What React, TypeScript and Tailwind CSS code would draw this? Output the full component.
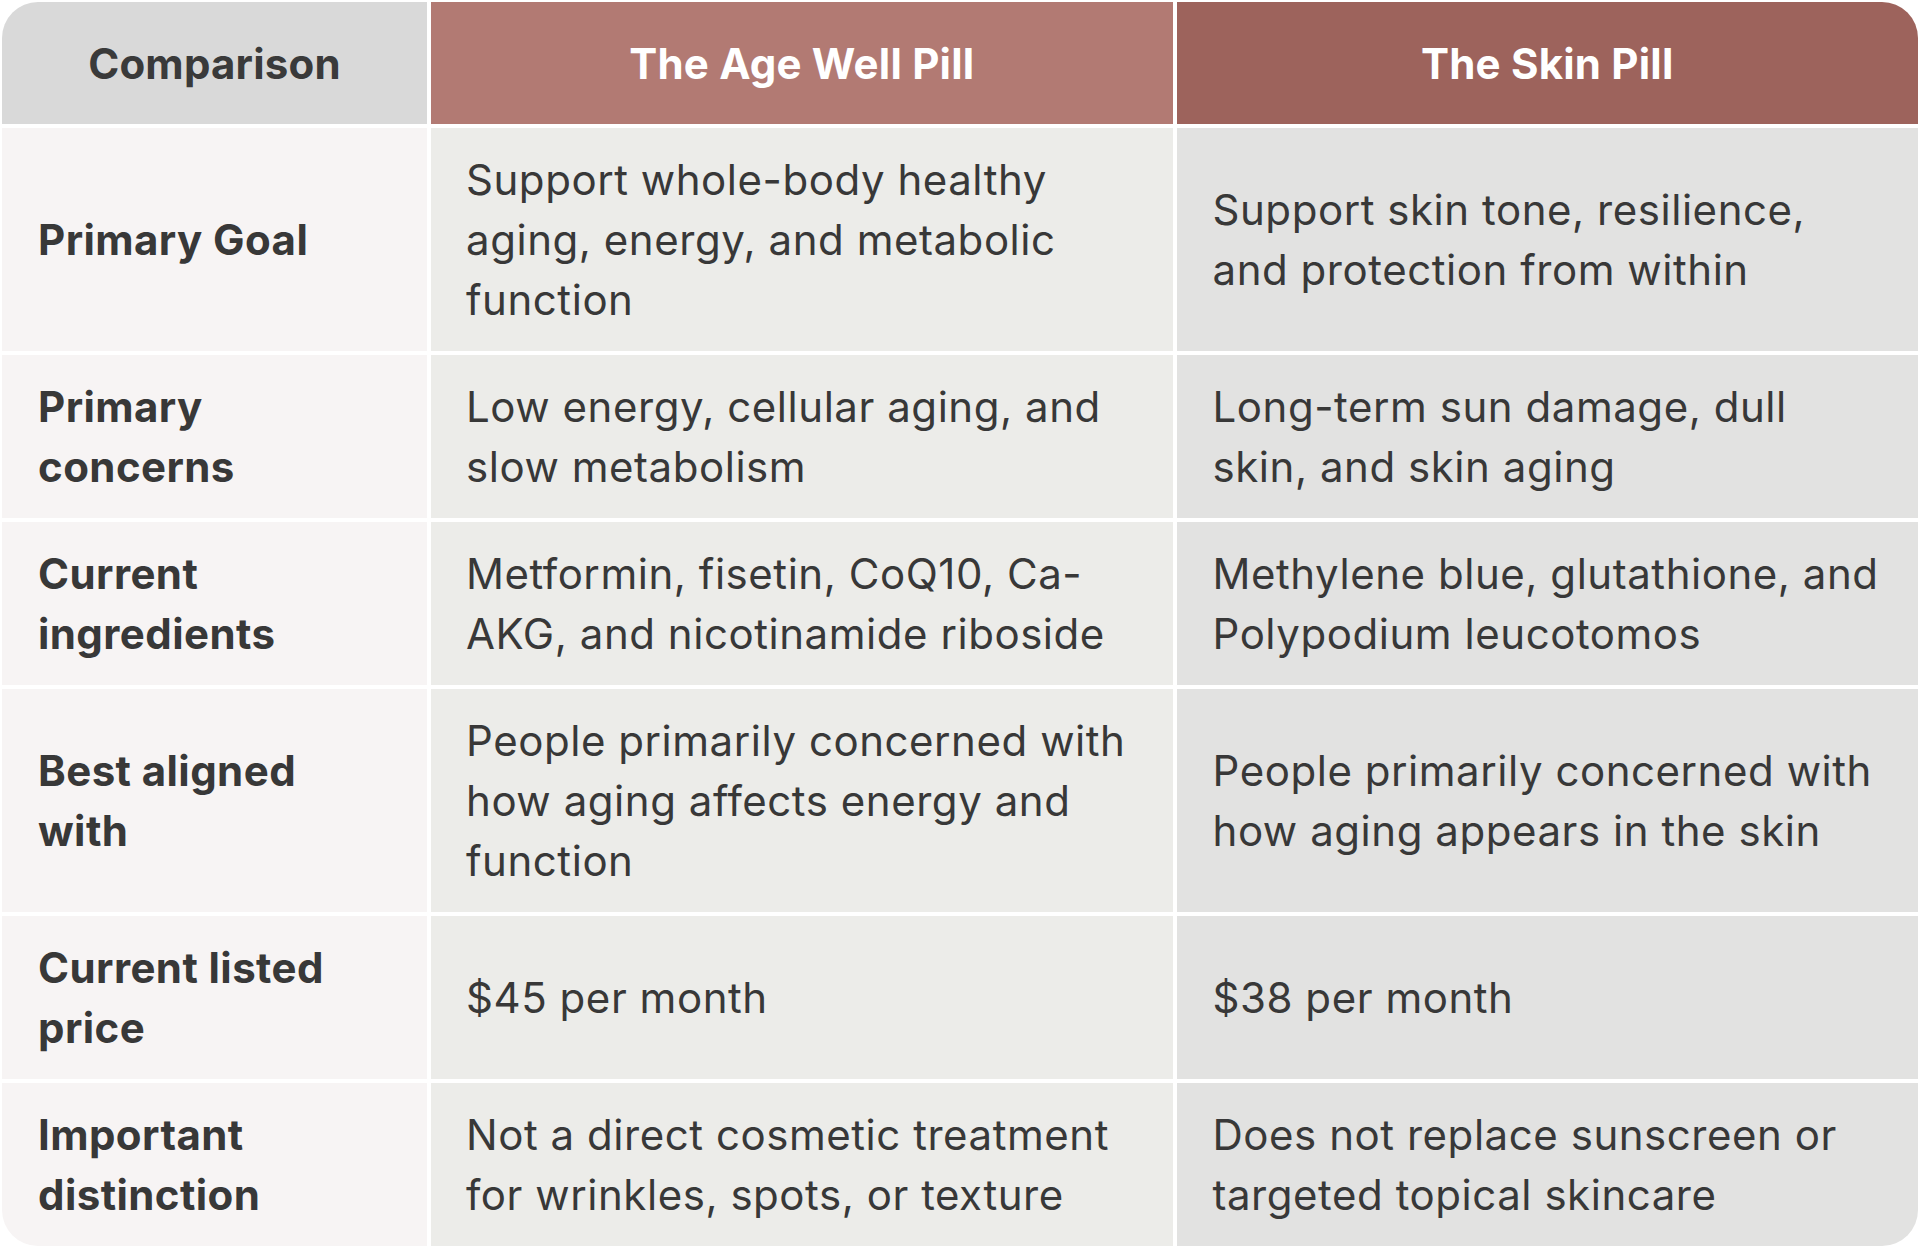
import React from "react";

type Row = { label: string[]; a: string[]; b: string[] };

const rows: Row[] = [
  {
    label: ["Primary Goal"],
    a: ["Support whole-body healthy", "aging, energy, and metabolic", "function"],
    b: ["Support skin tone, resilience,", "and protection from within"],
  },
  {
    label: ["Primary", "concerns"],
    a: ["Low energy, cellular aging, and", "slow metabolism"],
    b: ["Long-term sun damage, dull", "skin, and skin aging"],
  },
  {
    label: ["Current", "ingredients"],
    a: ["Metformin, fisetin, CoQ10, Ca-", "AKG, and nicotinamide riboside"],
    b: ["Methylene blue, glutathione, and", "Polypodium leucotomos"],
  },
  {
    label: ["Best aligned", "with"],
    a: ["People primarily concerned with", "how aging affects energy and", "function"],
    b: ["People primarily concerned with", "how aging appears in the skin"],
  },
  {
    label: ["Current listed", "price"],
    a: ["$45 per month"],
    b: ["$38 per month"],
  },
  {
    label: ["Important", "distinction"],
    a: ["Not a direct cosmetic treatment", "for wrinkles, spots, or texture"],
    b: ["Does not replace sunscreen or", "targeted topical skincare"],
  },
];

function Lines({ lines }: { lines: string[] }) {
  return (
    <>
      {lines.map((l, i) => (
        <span key={i} className="block whitespace-nowrap">
          {l}
        </span>
      ))}
    </>
  );
}

export default function App() {
  return (
    <div
      className="w-[1920px] h-[1248px] bg-white p-[2px] text-[#383838]"
      style={{ fontFamily: "Inter, 'Noto Sans', sans-serif" }}
    >
      <div className="rounded-[36px] overflow-hidden">
        <div className="grid grid-cols-[425px_1fr_1fr] gap-[4px] bg-white">
          <div className="bg-[#d9d9d9] h-[122px] flex items-center justify-center text-[42px] font-bold tracking-[0.005em] text-[#3a3a3a]">
            Comparison
          </div>
          <div className="bg-[#b27a73] h-[122px] flex items-center justify-center text-[42px] font-bold tracking-[0.005em] text-white">
            The Age Well Pill
          </div>
          <div className="bg-[#9d635c] h-[122px] flex items-center justify-center text-[42px] font-bold tracking-[0.005em] text-white">
            The Skin Pill
          </div>
          {rows.map((r, i) => (
            <React.Fragment key={i}>
              <div className="bg-[#f7f4f4] flex items-center px-[36px] py-[21.5px] text-[42px] leading-[60px] font-bold tracking-[0.01em] text-[#383838]">
                <div>
                  <Lines lines={r.label} />
                </div>
              </div>
              <div className="bg-[#ecece9] flex items-center px-[35px] py-[21.5px] text-[42px] leading-[60px] tracking-[0.013em]">
                <div>
                  <Lines lines={r.a} />
                </div>
              </div>
              <div className="bg-[#e2e2e1] flex items-center px-[36px] py-[21.5px] text-[42px] leading-[60px] tracking-[0.013em]">
                <div>
                  <Lines lines={r.b} />
                </div>
              </div>
            </React.Fragment>
          ))}
        </div>
      </div>
    </div>
  );
}
